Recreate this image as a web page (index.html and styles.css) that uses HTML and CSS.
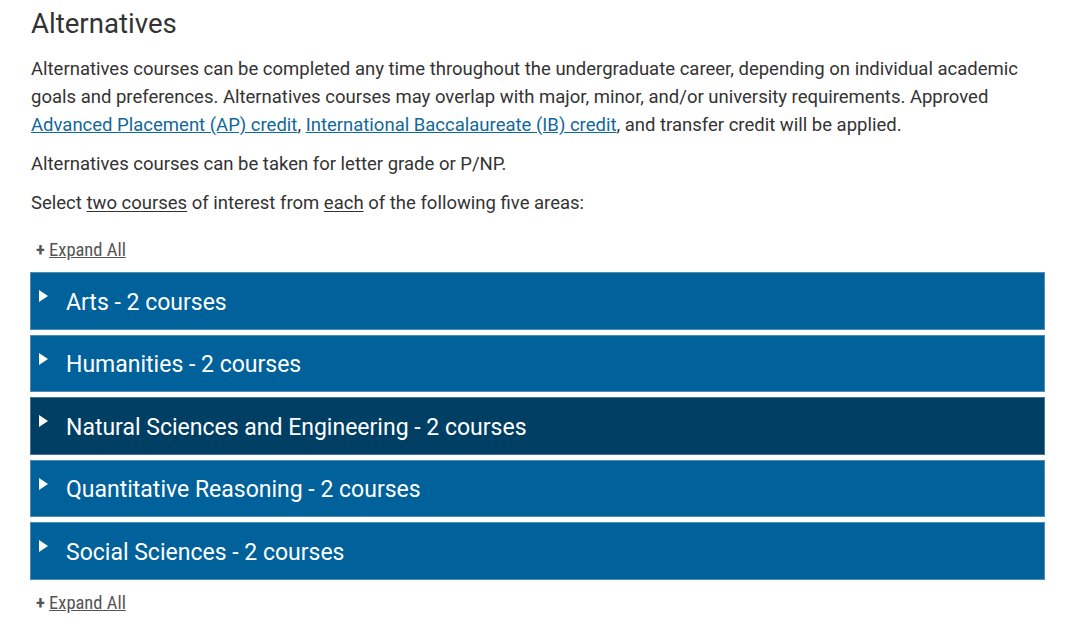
FILE: index.html
```
<!DOCTYPE html>
<html lang="en">
<head>
    <meta charset="UTF-8">
    <title>Alternatives</title>
    <link rel="stylesheet" href="styles.css">
</head>
<body>
<div class="page">
    <h2 class="title">Alternatives</h2>
    <p class="text">Alternatives courses can be completed any time throughout the undergraduate career, depending on individual academic goals and preferences. Alternatives courses may overlap with major, minor, and/or university requirements. Approved <a href="#">Advanced Placement (AP) credit</a>, <a href="#">International Baccalaureate (IB) credit</a>, and transfer credit will be applied.</p>
    <p class="text">Alternatives courses can be taken for letter grade or P/NP.</p>
    <p class="text">Select <u>two courses</u> of interest from <u>each</u> of the following five areas:</p>

    <div class="expand"><span class="plus">+</span> <a href="#">Expand All</a></div>

    <ul class="areas">
        <li class="area"><span class="arrow"></span>Arts - 2 courses</li>
        <li class="area"><span class="arrow"></span>Humanities - 2 courses</li>
        <li class="area active"><span class="arrow"></span>Natural Sciences and Engineering - 2 courses</li>
        <li class="area"><span class="arrow"></span>Quantitative Reasoning - 2 courses</li>
        <li class="area"><span class="arrow"></span>Social Sciences - 2 courses</li>
    </ul>

    <div class="expand bottom"><span class="plus">+</span> <a href="#">Expand All</a></div>
</div>
</body>
</html>
```

FILE: styles.css
```
html,body{
    margin:0;
}
body{
    background:#fff;
    font-family: Roboto, "Liberation Sans", sans-serif;
    color:#333;
}
.page{
    width:1015px;
    padding:6px 0 0 30px;
}
.title{
    margin:0 0 13px 1px;
    font-size:27.6px;
    font-weight:400;
    line-height:36px;
    color:#333;
}
.text{
    margin:0 0 11px 1px;
    font-size:18.5px;
    line-height:28px;
}
.text a{
    color:#11689a;
}
.text u{
    text-underline-offset:2px;
}
.expand{
    margin:23px 0 12px 6px;
    font-size:18.5px;
    font-stretch:condensed;
    line-height:20px;
}
.expand.bottom{
    margin-top:13px;
}
.expand .plus{
    font-weight:700;
    color:#555;
}
.expand a{
    color:#555;
}
ul{
    margin:0;
    padding:0;
    list-style:none;
}
.area{
    display:flex;
    align-items:center;
    height:57.5px;
    margin-bottom:5px;
    padding:3px 0 0 8px;
    border:1px solid #4f8db6;
    background:#00619b;
    color:#fff;
    font-size:23px;
    box-sizing:border-box;
}
.area.active{
    background:#003f64;
    border-color:#4a7590;
}
.arrow{
    width:0;
    height:0;
    border-top:6px solid transparent;
    border-bottom:6px solid transparent;
    border-left:9px solid #fff;
    margin:0 18px 12px 0;
}
```
